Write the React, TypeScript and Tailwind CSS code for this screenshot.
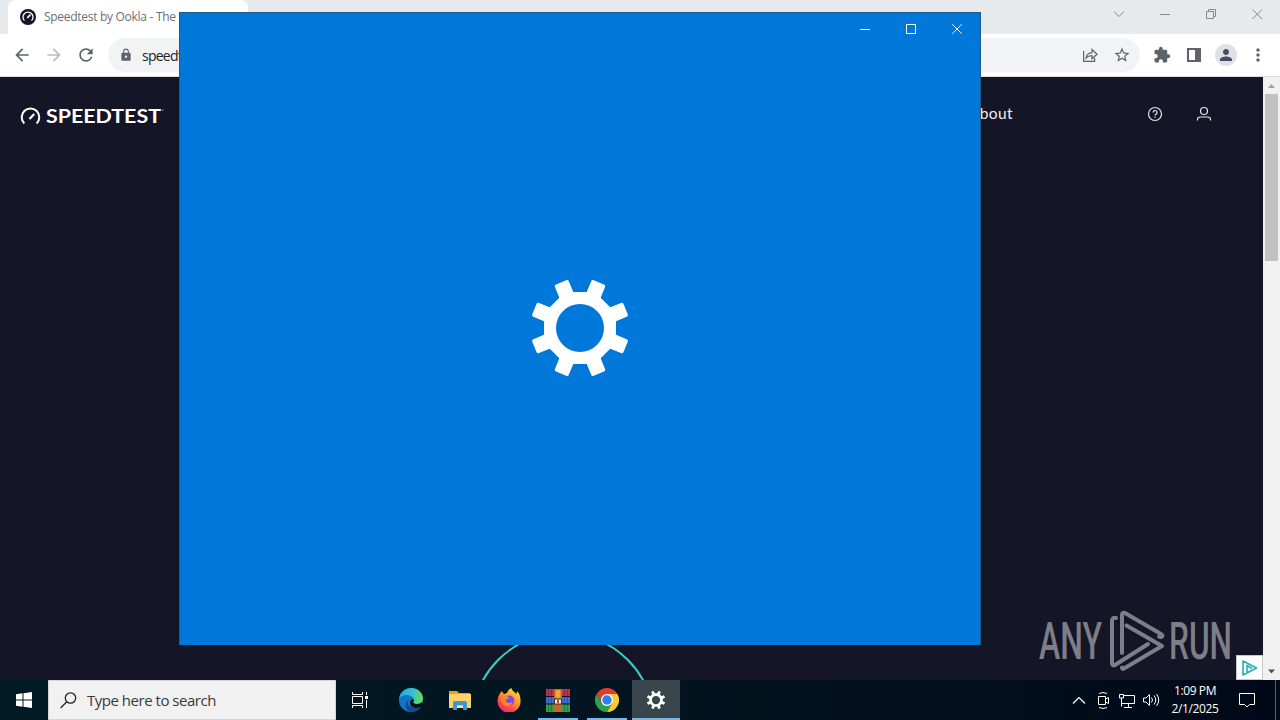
import { ReactNode } from "react";
import {
    MdArrowBack,
    MdArrowForward,
    MdExtension,
    MdLock,
    MdMoreVert,
    MdPerson,
    MdRefresh,
    MdStarBorder,
} from "react-icons/md";

function Gear({ size, color, hole = 24 }: { size: number; color: string; hole?: number }) {
    return (
        <svg width={size} height={size} viewBox="-48 -48 96 96" className="overflow-visible">
            {[0, 45, 90, 135, 180, 225, 270, 315].map((a) => (
                <rect
                    key={a}
                    x="-7.5"
                    y="-49.4"
                    width="15"
                    height="20"
                    rx="2"
                    fill={color}
                    transform={`rotate(${a + 22.5})`}
                />
            ))}
            <path
                fillRule="evenodd"
                fill={color}
                d={`M-14.9-36H14.9L36-14.9V14.9L14.9 36H-14.9L-36 14.9V-14.9ZM-${hole} 0a${hole} ${hole} 0 1 0 ${hole * 2} 0a${hole} ${hole} 0 1 0-${hole * 2} 0Z`}
            />
        </svg>
    );
}

function TabStrip() {
    return (
        <div className="flex h-[34px] items-stretch justify-between bg-[#e7eaed]">
            <div className="ml-2 flex w-[240px] items-center rounded-t-lg bg-white pl-3">
                <svg width="16" height="16" viewBox="0 0 16 16" className="shrink-0">
                    <circle cx="8" cy="8" r="8" fill="#141526" />
                    <path d="M4.4 11.6a5 5 0 1 1 7.2 0" fill="none" stroke="#fff" strokeWidth="1.3" />
                    <path d="M7.2 9 10.4 5.6" stroke="#fff" strokeWidth="1.6" />
                </svg>
                <span className="ml-2 whitespace-nowrap text-[12px] tracking-[-0.29px] text-[#6b6f74]">
                    Speedtest by Ookla - The
                </span>
            </div>
            <svg width="180" height="34" viewBox="1100 0 180 34" fill="none" stroke="#85888c">
                <path d="M1114 11.5 1119 16.5 1124 11.5M1160 14.5h10M1206.5 11.5h7v7h-7zM1208.5 11.5v-2h7v7h-2M1252.5 9.500l9.500 9.500M1262 9.500l-9.500 9.500" />
            </svg>
        </div>
    );
}

function Toolbar() {
    return (
        <div className="flex h-[43px] items-center border-b border-[#dcdddf] bg-white text-[#5f6368]">
            <MdArrowBack size={20} className="ml-3" />
            <MdArrowForward size={20} className="ml-3 text-[#babcbe]" />
            <MdRefresh size={20} className="ml-3" />
            <div className="ml-3 flex h-[34px] w-[1032px] items-center rounded-full bg-[#f1f3f4] pl-[11px] pr-[9px]">
                <MdLock size={14} />
                <span className="ml-[9px] text-[14px] tracking-[-0.75px] text-[#202124]">speedtest.net</span>
                <svg
                    width="16"
                    height="16"
                    viewBox="0 0 16 16"
                    fill="none"
                    stroke="#5f6368"
                    strokeWidth="1.2"
                    className="ml-auto"
                >
                    <path d="M1.600 4v10.400h11V11M4 11c.6-3.600 2.600-5.200 6-5.400V2.500l5 4.700L10 11.800V8.600C7.400 8.600 5.600 9.200 4 11Z" />
                </svg>
                <MdStarBorder size={18} className="ml-[15px]" />
            </div>
            <MdExtension size={18} className="ml-[13px]" />
            <svg width="16" height="16" viewBox="0 0 16 16" className="ml-[15px]">
                <path d="M2 2h12v12H2z" fill="none" stroke="#5f6368" strokeWidth="2" />
                <path d="M9 2h5v12H9z" fill="#5f6368" />
            </svg>
            <div className="ml-[13px] flex size-[22px] items-center justify-center rounded-full bg-[#dee1e6] text-[#474b66]">
                <MdPerson size={18} />
            </div>
            <MdMoreVert size={20} className="ml-[11px]" />
        </div>
    );
}

function SpeedtestPage() {
    return (
        <div className="relative flex-1 overflow-hidden bg-[#141526]">
            <header className="flex h-[73px] items-center">
                <svg width="146" height="26" viewBox="20 101 146 26" className="ml-5" fill="none">
                    <path d="M24.300 123.500a8.800 8.800 0 1 1 12.400 0" stroke="#fff" strokeWidth="2" />
                    <path d="M29.500 119 34.200 114" stroke="#fff" strokeWidth="2.200" />
                    <text
                        x="46"
                        y="123"
                        textLength="115"
                        lengthAdjust="spacingAndGlyphs"
                        fill="#fff"
                        className="font-['Lato'] text-[19px] font-bold"
                    >
                        SPEEDTEST
                    </text>
                    <path d="M162 110h1.500" stroke="#aaa" />
                </svg>
                <span className="ml-auto font-['Lato',sans-serif] text-[15.5px] tracking-[0.4px] text-[#f0f0f5]">
                    About
                </span>
                <svg width="16" height="16" viewBox="0 0 16 16" fill="none" stroke="#e6e6ee" strokeWidth="1.200" className="ml-[134px]">
                    <circle cx="8" cy="8" r="6.500" />
                    <path d="M6 6.500a2 2 0 1 1 2.700 1.900c-.5.200-.7.500-.7 1.200M8 10.600v1.200" />
                </svg>
                <svg width="16" height="16" viewBox="0 0 16 16" fill="none" stroke="#e6e6ee" strokeWidth="1.200" className="ml-[33px] mr-[51px]">
                    <circle cx="8" cy="5" r="3.500" />
                    <path d="M1.500 14.500v-1q0-2.500 2.500-2.500h8q2.500 0 2.500 2.500v1" />
                </svg>
            </header>
            <svg width="200" height="40" viewBox="463 640 200 40" className="absolute bottom-0 left-[463px]">
                <circle cx="563" cy="724.5" r="91.500" fill="none" stroke="#37cfc9" strokeWidth="2" />
            </svg>
            <Watermark />
            <div className="absolute bottom-0 right-0 flex h-[25px] w-[27px] items-center justify-center border border-[#c5c8cc] bg-white">
                <svg width="18" height="18" viewBox="0 0 18 18" fill="none" stroke="#1fb0bd" strokeWidth="1.600" strokeLinejoin="round">
                    <path d="M2 2 15.500 9 2 16zM6 14V6.500L11 9.500" />
                </svg>
            </div>
        </div>
    );
}

function Watermark() {
    return (
        <svg width="210" height="76" viewBox="1030 604 210 76" className="absolute bottom-0 right-[23px] overflow-visible">
            <g fill="#7d7e88" className="font-['Roboto'] text-[52px] font-medium">
                <text x="1039" y="659" textLength="63" lengthAdjust="spacingAndGlyphs">ANY</text>
                <text x="1169" y="659" textLength="63" lengthAdjust="spacingAndGlyphs">RUN</text>
            </g>
            <g fill="none" stroke="#7d7e88" strokeWidth="4" strokeLinejoin="round" strokeLinecap="round">
                <path d="M1116 618q-4-1-4 3v42q0 3 3 2l33-21" />
                <path d="M1122 653v-38q0-3 3-2l36 21q3 2 0 3l-2-.5" />
                <path d="M1126.500 625.500 1162 646l-38 22.500q-2 1-2-1" />
            </g>
        </svg>
    );
}

function ScrollBar() {
    return (
        <div className="flex w-[17px] flex-col items-center justify-between bg-[#f1f1f1]">
            <div className="flex flex-col items-center">
                <svg width="17" height="17" viewBox="0 0 17 17">
                    <path d="M5 11 8.500 7 12 11z" fill="#a3a3a3" />
                </svg>
                <div className="h-[167px] w-[13px] bg-[#c1c1c1]" />
            </div>
            <svg width="17" height="17" viewBox="0 0 17 17">
                <path d="M5 6.500h7L8.500 10.500z" fill="#505050" />
            </svg>
        </div>
    );
}

function SettingsWindow() {
    return (
        <div className="absolute left-[179px] top-3 flex h-[633px] w-[802px] flex-col border-x border-t border-[#23578a] bg-[#0078d9]">
            <div className="flex h-8 justify-end">
                <svg width="138" height="32" viewBox="842 13 138 32" fill="none" stroke="#fff">
                    <path d="M860 29.500h10M906.500 24.500h9v9h-9zM952.300 24.300l9.400 9.400M961.700 24.300l-9.400 9.400" />
                </svg>
            </div>
            <div className="flex flex-1 items-center justify-center pb-[34px]">
                <Gear size={96} color="#fff" />
            </div>
        </div>
    );
}

function TaskButton({ children, running, active }: { children: ReactNode; running?: boolean; active?: boolean }) {
    return (
        <div className={`flex h-10 w-12 flex-col items-center ${active ? "bg-[#38454c]" : ""}`}>
            <div className="flex flex-1 items-center pt-0.5">{children}</div>
            <div className={`h-0.5 ${active ? "w-12" : "w-10"} ${running ? "bg-[#76b9ed]" : ""}`} />
        </div>
    );
}

function EdgeIcon() {
    return (
        <svg width="24" height="24" viewBox="0 0 24 24">
            <defs>
                <linearGradient id="edgeTop" x1="0" x2="1" y1="0.300" y2="0.500">
                    <stop offset="0" stopColor="#2aa5dc" />
                    <stop offset="0.500" stopColor="#32c1d3" />
                    <stop offset="1" stopColor="#63d957" />
                </linearGradient>
            </defs>
            <circle cx="12" cy="12" r="12" fill="#1373c8" />
            <path d="M.2 10.500C1 4.500 6 0 12 0c7 0 12 5 12 10.500 0 3.500-2.700 5.500-6 5.500-3 0-4.500-1-3.500-2.200 1-1.300.8-3-.5-4.300C11 6.300 3.500 5.800.2 10.500Z" fill="url(#edgeTop)" />
            <path d="M9.300 12c-2.300 6 3.700 10.500 11.700 7-2 3.200-5.500 5-9 5-5-1-7.500-8-2.700-12Z" fill="#114a8b" />
            <path d="M14.500 13.800c-1 1.200.5 2.200 3.500 2.200 2.300 0 4-.7 5-2l1 2.500-3 3c-5 1.500-10-.5-10-4.500 0-2 1-3.500 2.500-4 1.500.5 1.800 1.800 1 2.800Z" fill="#02151f" />
        </svg>
    );
}

function ExplorerIcon() {
    return (
        <svg width="22" height="20" viewBox="0 0 22 20">
            <path d="M0 1h8l2 2h11v4H0z" fill="#e6a323" />
            <path d="M0 4h22v14H0z" fill="#fbd367" />
            <path d="M4 20v-7q0-2 2-2h10q2 0 2 2v7h-4v-4.500H8V20z" fill="#3f94d4" />
            <path d="M8 15.500h6V18H8z" fill="#fbe7a0" />
        </svg>
    );
}

function FirefoxIcon() {
    return (
        <svg width="24" height="24" viewBox="0 0 24 24">
            <defs>
                <linearGradient id="fox" x1="0.800" x2="0.200" y1="0" y2="1">
                    <stop offset="0" stopColor="#ffe142" />
                    <stop offset="0.450" stopColor="#ff9125" />
                    <stop offset="0.750" stopColor="#ff4050" />
                    <stop offset="1" stopColor="#e0218a" />
                </linearGradient>
            </defs>
            <path d="M4.500 3 7 6l3-1c1-3 3-4.500 4.500-5 .2 3 3 3.500 5 6l.5-3c3 3 3.500 6.500 3.500 9A11.500 11.500 0 1 1 .8 11C1 7.500 3 6 4.500 3Z" fill="url(#fox)" />
            <circle cx="12.500" cy="12.500" r="5" fill="#7d4be0" />
            <path d="M4 9c3-2 6-1 8 .5 0 1.500-3 1.500-3.500 3 1 3 5 3 7 1.500-1 5-9 6-11 0Z" fill="#ff8a24" />
        </svg>
    );
}

function WinrarIcon() {
    return (
        <svg width="24" height="23" viewBox="0 0 24 23">
            <path d="M0 0h24v7H0z" fill="#c22f4b" />
            <path d="M0 8h24v6.500H0z" fill="#4568d0" />
            <path d="M0 15.500h24V23H0z" fill="#2fa048" />
            <path d="M2.500 1v21M5.500 1v21M18.500 1v21M21.500 1v21" stroke="#0e1a2a" strokeOpacity="0.300" />
            <path d="M8 0h8v23H8z" fill="#c4652a" />
            <path d="M9.500 1h5v8h-5z" fill="#f1a53b" />
            <path d="M8.500 10h7v5h-7z" fill="#f6f0d8" stroke="#4b2c18" />
            <path d="M12 11v3" stroke="#4b2c18" strokeWidth="1.500" />
        </svg>
    );
}

function ChromeIcon() {
    return (
        <svg width="24" height="24" viewBox="0 0 24 24">
            <path d="M1.600 6A12 12 0 0 1 22.400 6H12L6.800 15Z" fill="#e33b2e" />
            <path d="M12 6h10.400A12 12 0 0 1 12 24l5.200-9Z" fill="#fcc934" />
            <path d="M17.200 15 12 24A12 12 0 0 1 1.600 6l5.200 9Z" fill="#2ba24c" />
            <circle cx="12" cy="12" r="6" fill="#fff" />
            <circle cx="12" cy="12" r="4.700" fill="#3080f0" />
        </svg>
    );
}

function Taskbar() {
    return (
        <div className="flex h-10 items-center bg-linear-to-r from-[#001a24] via-[#02141f] to-[#010918] text-white">
            <div className="flex w-12 justify-center">
                <svg width="16" height="16" viewBox="0 0 16 16" fill="#fff">
                    <path d="M0 2.200 6.500 1.300V7.500H0zM7.500 1.200 16 0v7.500H7.500zM0 8.500h6.500v6.200L0 13.800zM7.500 8.500H16V16l-8.500-1.200z" />
                </svg>
            </div>
            <div className="flex h-10 w-[288px] items-center border border-[#d4d4d8] bg-[#f1f1f1] pl-[11px]">
                <svg width="17" height="17" viewBox="0 0 17 17" fill="none" stroke="#222" strokeWidth="1.300">
                    <circle cx="10.500" cy="6" r="5.200" />
                    <path d="M6.800 9.800.6 16" />
                </svg>
                <span className="ml-[10px] pt-px text-[15px] tracking-[-0.48px] text-[#3a3a3a]">Type here to search</span>
            </div>
            <div className="flex w-12 justify-center">
                <svg width="16" height="16" viewBox="0 0 16 16" fill="none" stroke="#fff">
                    <path d="M.5 0v2.500h10V0M.5 4.500h10v7H.5zM.5 16v-2.500h10V16M14.500 0v3M14.500 8v8" />
                    <path d="M13 4h3v3h-3z" fill="#fff" stroke="none" />
                </svg>
            </div>
            <div className="ml-[3px] flex gap-px">
                <TaskButton><EdgeIcon /></TaskButton>
                <TaskButton><ExplorerIcon /></TaskButton>
                <TaskButton><FirefoxIcon /></TaskButton>
                <TaskButton running><WinrarIcon /></TaskButton>
                <TaskButton running><ChromeIcon /></TaskButton>
                <TaskButton running active><Gear size={18} color="#fff" hole={22} /></TaskButton>
            </div>
            <svg width="92" height="24" viewBox="1070 688 92 24" fill="none" stroke="#fff" className="ml-auto">
                <path d="M1073 703.500l6-6 6 6" strokeWidth="1.200" />
                <path d="M1098.500 696.500h7v8h-7zM1105.500 699l3-1.500v6l-3-1.500M1099 693.500q4-2 8 0M1099 707.500q4 2 8 0" />
                <path d="M1123 695.500h11.500v8H1122M1119.500 694.500h4v3.500h-4zM1121.500 698v8.500M1128.500 704v3M1124 707.500h8" />
                <path d="M1143.500 698v4h2.500l3.500 3.500v-11L1146 698zM1151.500 697.500q2 2.500 0 5M1154 695.500q3.500 4.500 0 9M1156.500 694q4.500 6 0 12" />
            </svg>
            <div className="ml-0.5 w-[62px] text-center text-[12px] leading-[18px] tracking-[-0.400px]">
                <div>1:09 PM</div>
                <div>2/1/2025</div>
            </div>
            <svg width="18" height="18" viewBox="0 0 18 18" fill="none" stroke="#fff" className="ml-3">
                <path d="M1.500 2.500h15v11h-5l-2.500 2.500-2.500-2.500h-5z" />
            </svg>
            <div className="ml-[19px] mr-1 h-10 w-px bg-[#59606c]" />
        </div>
    );
}

export default function App() {
    return (
        <div className="relative flex h-[720px] w-[1280px] flex-col overflow-hidden font-['Open_Sans','Noto_Sans',sans-serif]">
            <TabStrip />
            <Toolbar />
            <div className="flex flex-1">
                <SpeedtestPage />
                <ScrollBar />
            </div>
            <Taskbar />
            <SettingsWindow />
        </div>
    );
}
